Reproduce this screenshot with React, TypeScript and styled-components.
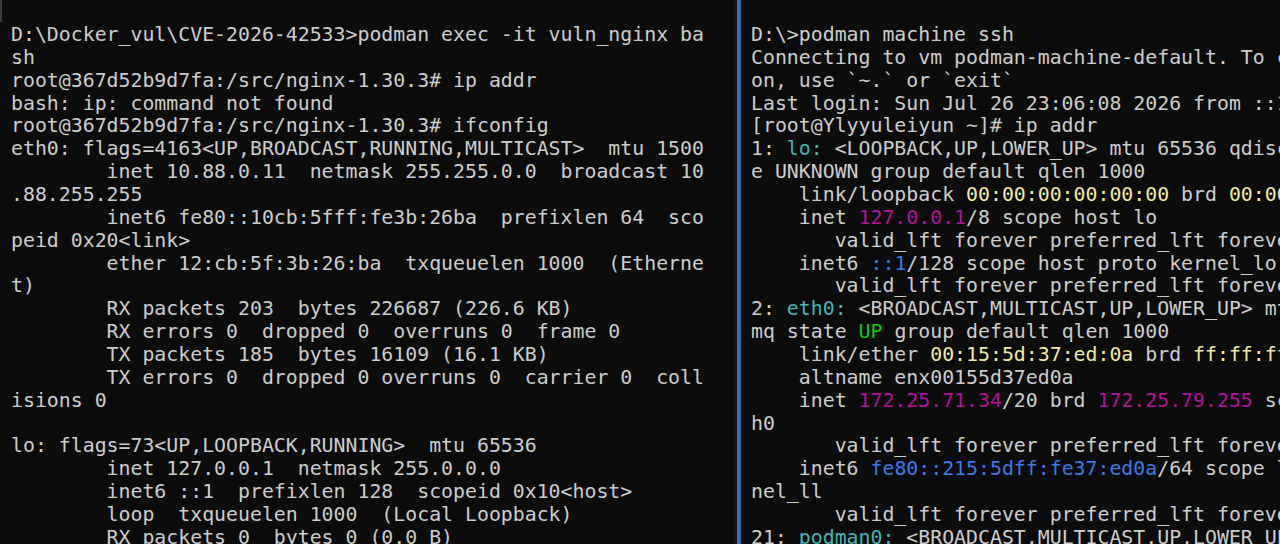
import React from "react";
import styled, { createGlobalStyle } from "styled-components";

const GlobalStyle = createGlobalStyle`
  html, body {
    margin: 0;
    padding: 0;
    background: #0c0c0c;
    overflow: hidden;
  }
  #root {
    width: 1280px;
    height: 544px;
  }
`;

type ColorKey = "cyan" | "yellow" | "magenta" | "blue" | "green";
type Seg = string | [string, ColorKey];
type LineData = Seg[];

const palette: Record<ColorKey, string> = {
  cyan: "#3fb7b4",
  yellow: "#f0e8a4",
  magenta: "#b4129e",
  blue: "#3b78e8",
  green: "#16c60c",
};

const leftLines: LineData[] = [
  ["D:\\Docker_vul\\CVE-2026-42533>podman exec -it vuln_nginx ba"],
  ["sh"],
  ["root@367d52b9d7fa:/src/nginx-1.30.3# ip addr"],
  ["bash: ip: command not found"],
  ["root@367d52b9d7fa:/src/nginx-1.30.3# ifconfig"],
  ["eth0: flags=4163<UP,BROADCAST,RUNNING,MULTICAST>  mtu 1500"],
  ["        inet 10.88.0.11  netmask 255.255.0.0  broadcast 10"],
  [".88.255.255"],
  ["        inet6 fe80::10cb:5fff:fe3b:26ba  prefixlen 64  sco"],
  ["peid 0x20<link>"],
  ["        ether 12:cb:5f:3b:26:ba  txqueuelen 1000  (Etherne"],
  ["t)"],
  ["        RX packets 203  bytes 226687 (226.6 KB)"],
  ["        RX errors 0  dropped 0  overruns 0  frame 0"],
  ["        TX packets 185  bytes 16109 (16.1 KB)"],
  ["        TX errors 0  dropped 0 overruns 0  carrier 0  coll"],
  ["isions 0"],
  [""],
  ["lo: flags=73<UP,LOOPBACK,RUNNING>  mtu 65536"],
  ["        inet 127.0.0.1  netmask 255.0.0.0"],
  ["        inet6 ::1  prefixlen 128  scopeid 0x10<host>"],
  ["        loop  txqueuelen 1000  (Local Loopback)"],
  ["        RX packets 0  bytes 0 (0.0 B)"],
];

const rightLines: LineData[] = [
  ["D:\\>podman machine ssh"],
  ["Connecting to vm podman-machine-default. To close connecti"],
  ["on, use `~.` or `exit`"],
  ["Last login: Sun Jul 26 23:06:08 2026 from ::1"],
  ["[root@Ylyyuleiyun ~]# ip addr"],
  ["1: ", ["lo:", "cyan"], " <LOOPBACK,UP,LOWER_UP> mtu 65536 qdisc noqueue stat"],
  ["e UNKNOWN group default qlen 1000"],
  ["    link/loopback ", ["00:00:00:00:00:00", "yellow"], " brd ", ["00:00:00:00:00:00", "yellow"]],
  ["    inet ", ["127.0.0.1", "magenta"], "/8 scope host lo"],
  ["       valid_lft forever preferred_lft forever"],
  ["    inet6 ", ["::1", "blue"], "/128 scope host proto kernel_lo"],
  ["       valid_lft forever preferred_lft forever"],
  ["2: ", ["eth0:", "cyan"], " <BROADCAST,MULTICAST,UP,LOWER_UP> mtu 1500 qdisc "],
  ["mq state ", ["UP", "green"], " group default qlen 1000"],
  ["    link/ether ", ["00:15:5d:37:ed:0a", "yellow"], " brd ", ["ff:ff:ff:ff:ff:ff", "yellow"]],
  ["    altname enx00155d37ed0a"],
  ["    inet ", ["172.25.71.34", "magenta"], "/20 brd ", ["172.25.79.255", "magenta"], " scope global et"],
  ["h0"],
  ["       valid_lft forever preferred_lft forever"],
  ["    inet6 ", ["fe80::215:5dff:fe37:ed0a", "blue"], "/64 scope link proto ker"],
  ["nel_ll"],
  ["       valid_lft forever preferred_lft forever"],
  ["21: ", ["podman0:", "cyan"], " <BROADCAST,MULTICAST,UP,LOWER_UP> mtu 1500 qdisc"],
];

const Window = styled.div`
  display: flex;
  width: 1280px;
  height: 544px;
  background: #0c0c0c;
  overflow: hidden;
`;

const Pane = styled.div<{ $width?: number; $padLeft: number }>`
  position: relative;
  flex: ${(p) => (p.$width ? `0 0 ${p.$width}px` : "1 1 auto")};
  min-width: 0;
  height: 100%;
  overflow: hidden;
  padding: 24px 0 0 ${(p) => p.$padLeft}px;
  box-sizing: border-box;
  background: #0c0c0c;
`;

const ScrollMark = styled.div`
  position: absolute;
  left: 0;
  top: 0;
  width: 2px;
  height: 22px;
  background: #3a3a3a;
`;

const Divider = styled.div`
  flex: 0 0 7px;
  height: 100%;
  display: flex;
`;

const DividerShade = styled.div`
  flex: 0 0 3px;
  background: #161616;
`;

const DividerAccent = styled.div`
  flex: 0 0 4px;
  background: #2e6bb3;
`;

const Screen = styled.div`
  font-family: "DejaVu Sans Mono", "Liberation Mono", monospace;
  font-size: 19.85px;
  line-height: 22.86px;
  color: #cccccc;
  white-space: pre;
`;

const Line = styled.div`
  height: 22.86px;
`;

const Colored = styled.span<{ $c: ColorKey }>`
  color: ${(p) => palette[p.$c]};
`;

function TerminalText({ lines }: { lines: LineData[] }) {
  return (
    <Screen>
      {lines.map((line, i) => (
        <Line key={i}>
          {line.map((seg, j) =>
            typeof seg === "string" ? (
              <React.Fragment key={j}>{seg}</React.Fragment>
            ) : (
              <Colored key={j} $c={seg[1]}>
                {seg[0]}
              </Colored>
            )
          )}
        </Line>
      ))}
    </Screen>
  );
}

export default function App() {
  return (
    <>
      <GlobalStyle />
      <Window>
        <Pane $width={734} $padLeft={11}>
          <ScrollMark />
          <TerminalText lines={leftLines} />
        </Pane>
        <Divider>
          <DividerShade />
          <DividerAccent />
        </Divider>
        <Pane $padLeft={10}>
          <TerminalText lines={rightLines} />
        </Pane>
      </Window>
    </>
  );
}
